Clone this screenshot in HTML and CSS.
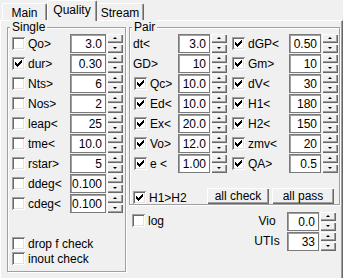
FILE: index.html
```html
<!DOCTYPE html>
<html>
<head>
<meta charset="utf-8">
<link rel="stylesheet" href="styles.css">
</head>
<body>
<div class="tabs">
  <div class="tab tab-main">Main</div>
  <div class="tab tab-active">Quality</div>
  <div class="tab tab-stream">Stream</div>
</div>
<div class="panel">
  <div class="group single">
    <div class="legend">Single</div>
    <div class="row"><label class="lbl"><span class="cb"></span>Qo&gt;</label><span class="edit">3.0</span><span class="spin"><i class="up"></i><i class="dn"></i></span></div>
    <div class="row"><label class="lbl"><span class="cb on"><svg viewBox="0 0 13 13" width="13" height="13"><path d="M3 5h1v1h1v1h1v-1h1v-1h1v-1h1v-1h1v3h-1v1h-1v1h-1v1h-1v1h-1v-1h-1v-1h-1z"/></svg></span>dur&gt;</label><span class="edit">0.30</span><span class="spin"><i class="up"></i><i class="dn"></i></span></div>
    <div class="row"><label class="lbl"><span class="cb"></span>Nts&gt;</label><span class="edit">6</span><span class="spin"><i class="up"></i><i class="dn"></i></span></div>
    <div class="row"><label class="lbl"><span class="cb"></span>Nos&gt;</label><span class="edit">2</span><span class="spin"><i class="up"></i><i class="dn"></i></span></div>
    <div class="row"><label class="lbl"><span class="cb"></span>leap&lt;</label><span class="edit">25</span><span class="spin"><i class="up"></i><i class="dn"></i></span></div>
    <div class="row"><label class="lbl"><span class="cb"></span>tme&lt;</label><span class="edit">10.0</span><span class="spin"><i class="up"></i><i class="dn"></i></span></div>
    <div class="row"><label class="lbl"><span class="cb"></span>rstar&gt;</label><span class="edit">5</span><span class="spin"><i class="up"></i><i class="dn"></i></span></div>
    <div class="row"><label class="lbl"><span class="cb"></span>ddeg&lt;</label><span class="edit">0.100</span><span class="spin"><i class="up"></i><i class="dn"></i></span></div>
    <div class="row"><label class="lbl"><span class="cb"></span>cdeg&lt;</label><span class="edit">0.100</span><span class="spin"><i class="up"></i><i class="dn"></i></span></div>
    <div class="checks">
      <label class="chkline"><span class="cb"></span>drop f check</label>
      <label class="chkline"><span class="cb"></span>inout check</label>
    </div>
  </div>
  <div class="rightcol">
    <div class="group pair">
      <div class="legend">Pair</div>
      <div class="pgrid">
        <div class="row"><label class="lbl pl nocb">dt&lt;</label><span class="edit">3.0</span><span class="spin"><i class="up"></i><i class="dn"></i></span>
          <label class="lbl pr"><span class="cb on"><svg viewBox="0 0 13 13" width="13" height="13"><path d="M3 5h1v1h1v1h1v-1h1v-1h1v-1h1v-1h1v3h-1v1h-1v1h-1v1h-1v1h-1v-1h-1v-1h-1z"/></svg></span>dGP&lt;</label><span class="edit">0.50</span><span class="spin"><i class="up"></i><i class="dn"></i></span></div>
        <div class="row"><label class="lbl pl nocb">GD&gt;</label><span class="edit">10</span><span class="spin"><i class="up"></i><i class="dn"></i></span>
          <label class="lbl pr"><span class="cb on"><svg viewBox="0 0 13 13" width="13" height="13"><path d="M3 5h1v1h1v1h1v-1h1v-1h1v-1h1v-1h1v3h-1v1h-1v1h-1v1h-1v1h-1v-1h-1v-1h-1z"/></svg></span>Gm&gt;</label><span class="edit">10</span><span class="spin"><i class="up"></i><i class="dn"></i></span></div>
        <div class="row"><label class="lbl pl"><span class="cb on"><svg viewBox="0 0 13 13" width="13" height="13"><path d="M3 5h1v1h1v1h1v-1h1v-1h1v-1h1v-1h1v3h-1v1h-1v1h-1v1h-1v1h-1v-1h-1v-1h-1z"/></svg></span>Qc&gt;</label><span class="edit">10.0</span><span class="spin"><i class="up"></i><i class="dn"></i></span>
          <label class="lbl pr"><span class="cb on"><svg viewBox="0 0 13 13" width="13" height="13"><path d="M3 5h1v1h1v1h1v-1h1v-1h1v-1h1v-1h1v3h-1v1h-1v1h-1v1h-1v1h-1v-1h-1v-1h-1z"/></svg></span>dV&lt;</label><span class="edit">30</span><span class="spin"><i class="up"></i><i class="dn"></i></span></div>
        <div class="row"><label class="lbl pl"><span class="cb on"><svg viewBox="0 0 13 13" width="13" height="13"><path d="M3 5h1v1h1v1h1v-1h1v-1h1v-1h1v-1h1v3h-1v1h-1v1h-1v1h-1v1h-1v-1h-1v-1h-1z"/></svg></span>Ed&lt;</label><span class="edit">10.0</span><span class="spin"><i class="up"></i><i class="dn"></i></span>
          <label class="lbl pr"><span class="cb on"><svg viewBox="0 0 13 13" width="13" height="13"><path d="M3 5h1v1h1v1h1v-1h1v-1h1v-1h1v-1h1v3h-1v1h-1v1h-1v1h-1v1h-1v-1h-1v-1h-1z"/></svg></span>H1&lt;</label><span class="edit">180</span><span class="spin"><i class="up"></i><i class="dn"></i></span></div>
        <div class="row"><label class="lbl pl"><span class="cb on"><svg viewBox="0 0 13 13" width="13" height="13"><path d="M3 5h1v1h1v1h1v-1h1v-1h1v-1h1v-1h1v3h-1v1h-1v1h-1v1h-1v1h-1v-1h-1v-1h-1z"/></svg></span>Ex&lt;</label><span class="edit">20.0</span><span class="spin"><i class="up"></i><i class="dn"></i></span>
          <label class="lbl pr"><span class="cb on"><svg viewBox="0 0 13 13" width="13" height="13"><path d="M3 5h1v1h1v1h1v-1h1v-1h1v-1h1v-1h1v3h-1v1h-1v1h-1v1h-1v1h-1v-1h-1v-1h-1z"/></svg></span>H2&lt;</label><span class="edit">150</span><span class="spin"><i class="up"></i><i class="dn"></i></span></div>
        <div class="row"><label class="lbl pl"><span class="cb on"><svg viewBox="0 0 13 13" width="13" height="13"><path d="M3 5h1v1h1v1h1v-1h1v-1h1v-1h1v-1h1v3h-1v1h-1v1h-1v1h-1v1h-1v-1h-1v-1h-1z"/></svg></span>Vo&gt;</label><span class="edit">12.0</span><span class="spin"><i class="up"></i><i class="dn"></i></span>
          <label class="lbl pr"><span class="cb on"><svg viewBox="0 0 13 13" width="13" height="13"><path d="M3 5h1v1h1v1h1v-1h1v-1h1v-1h1v-1h1v3h-1v1h-1v1h-1v1h-1v1h-1v-1h-1v-1h-1z"/></svg></span>zmv&lt;</label><span class="edit">20</span><span class="spin"><i class="up"></i><i class="dn"></i></span></div>
        <div class="row"><label class="lbl pl"><span class="cb on"><svg viewBox="0 0 13 13" width="13" height="13"><path d="M3 5h1v1h1v1h1v-1h1v-1h1v-1h1v-1h1v3h-1v1h-1v1h-1v1h-1v1h-1v-1h-1v-1h-1z"/></svg></span>e &lt;</label><span class="edit">1.00</span><span class="spin"><i class="up"></i><i class="dn"></i></span>
          <label class="lbl pr"><span class="cb on"><svg viewBox="0 0 13 13" width="13" height="13"><path d="M3 5h1v1h1v1h1v-1h1v-1h1v-1h1v-1h1v3h-1v1h-1v1h-1v1h-1v1h-1v-1h-1v-1h-1z"/></svg></span>QA&gt;</label><span class="edit">0.5</span><span class="spin"><i class="up"></i><i class="dn"></i></span></div>
      </div>
      <div class="pfoot">
        <label class="chkline"><span class="cb on"><svg viewBox="0 0 13 13" width="13" height="13"><path d="M3 5h1v1h1v1h1v-1h1v-1h1v-1h1v-1h1v3h-1v1h-1v1h-1v1h-1v1h-1v-1h-1v-1h-1z"/></svg></span>H1&gt;H2</label>
        <span class="btn btn-check">all check</span>
        <span class="btn btn-pass">all pass</span>
      </div>
    </div>
    <div class="extras">
      <label class="chkline log"><span class="cb"></span>log</label>
      <div class="vgrid">
        <span class="vlbl">Vio</span><span class="edit">0.0</span><span class="spin"><i class="up"></i><i class="dn"></i></span>
        <span class="vlbl">UTIs</span><span class="edit">33</span><span class="spin"><i class="up"></i><i class="dn"></i></span>
      </div>
    </div>
  </div>
</div>
</body>
</html>
```

FILE: styles.css
```css
* { box-sizing: border-box; }
html, body { margin: 0; padding: 0; }
body {
  width: 343px;
  height: 278px;
  overflow: hidden;
  background: #f0f0f0;
  color: #000;
  font-family: "Liberation Sans", Arial, sans-serif;
  font-size: 12px;
  line-height: 14px;
}

/* tabs */
.tabs {
  display: flex;
  height: 20px;
  padding-left: 2px;
  position: relative;
  z-index: 2;
}
.tab {
  margin-top: 3px;
  height: 17px;
  padding-top: 2px;
  text-align: center;
  border-top: 1px solid #fff;
  border-left: 1px solid #fff;
  border-right: 1px solid #696969;
  box-shadow: inset -1px 0 0 #a0a0a0;
  border-radius: 2px 2px 0 0;
  background: #f0f0f0;
}
.tab-main { width: 45px; }
.tab-active {
  width: 50px;
  margin-top: 0;
  height: 21px;
  padding-top: 2px;
}
.tab-stream { width: 47px; border-left: none; }

/* panel */
.panel {
  display: flex;
  gap: 3px;
  height: 258px;
  padding-left: 6px;
  border-top: 1px solid #fff;
  border-left: 1px solid #fff;
  border-right: 1px solid #696969;
  box-shadow: inset -1px 0 0 #a0a0a0;
}

/* group boxes */
.group {
  display: flex;
  flex-direction: column;
  border: 1px solid #a0a0a0;
  box-shadow: 1px 1px 0 #fff, inset 1px 1px 0 #fff;
  margin-top: 6px;
}
.legend {
  align-self: flex-start;
  margin: -8px 0 0 2px;
  padding: 0 2px;
  height: 14px;
  background: #f0f0f0;
}
.single { width: 119px; height: 245px; }
.rightcol { display: flex; flex-direction: column; width: 211px; }
.pair { height: 178px; }

/* rows */
.row {
  display: flex;
  align-items: flex-start;
  height: 20px;
}
.lbl {
  display: flex;
  align-items: center;
  height: 19px;
  width: 62px;
  padding-left: 4px;
}
.pgrid .lbl.pl { width: 48px; }
.pgrid .lbl.pr { width: 62px; padding-left: 5px; }
.lbl.nocb { padding-left: 3px; }

.cb {
  flex: none;
  display: block;
  width: 13px;
  height: 13px;
  margin-right: 3px;
  background: #fff;
  box-shadow: inset 1px 1px 0 #a0a0a0, inset -1px -1px 0 #fff, inset 2px 2px 0 #696969, inset -2px -2px 0 #e3e3e3;
}
.cb svg { display: block; fill: #000; shape-rendering: crispEdges; }

.edit {
  flex: none;
  display: block;
  width: 36px;
  height: 19px;
  padding: 2px 3px 0 0;
  text-align: right;
  background: #fff;
  border: 1px solid #7a7a7a;
  box-shadow: inset 1px 1px 0 #a0a0a0;
}
.pgrid .edit { width: 32px; }

.spin {
  flex: none;
  display: flex;
  flex-direction: column;
  gap: 1px;
  width: 16px;
  height: 19px;
  margin-left: 1px;
}
.spin i {
  display: flex;
  align-items: center;
  justify-content: center;
  height: 9px;
  background: #f0f0f0;
  box-shadow: inset 1px 1px 0 #fff, inset -1px -1px 0 #696969, inset -2px -2px 0 #a0a0a0;
}
.spin i::after {
  content: "";
  width: 0;
  height: 0;
  border-left: 2px solid transparent;
  border-right: 2px solid transparent;
}
.spin .up::after { border-bottom: 2px solid #000; margin-top: -1px; }
.spin .dn::after { border-top: 2px solid #000; margin-top: -1px; }

/* checks at bottom of single */
.checks {
  margin-top: auto;
  margin-bottom: 6px;
  display: flex;
  flex-direction: column;
  gap: 2px;
}
.chkline {
  display: flex;
  align-items: center;
  height: 13px;
  padding-left: 4px;
}

/* pair footer */
.pfoot {
  margin-top: auto;
  display: flex;
  align-items: flex-start;
  padding-left: 3px;
  padding-bottom: 0;
}
.pfoot .chkline { padding-left: 0; width: 74px; margin-top: 3px; }
.btn {
  display: block;
  height: 16px;
  padding-top: 1px;
  text-align: center;
  background: #f0f0f0;
  box-shadow: inset 1px 1px 0 #fff, inset -1px -1px 0 #696969, inset -2px -2px 0 #a0a0a0;
}
.btn-check { width: 62px; }
.btn-pass { width: 62px; margin-left: 3px; }

/* extras */
.extras {
  display: flex;
  justify-content: space-between;
  padding-top: 7px;
  padding-left: 3px;
}
.log { padding-left: 0; margin-top: 2px; }
.vgrid {
  display: grid;
  grid-template-columns: 40px 32px 17px;
  row-gap: 1px;
  margin-right: 4px;
}
.vlbl { text-align: center; padding-top: 2px; }
.vgrid .edit { width: 32px; }
```
